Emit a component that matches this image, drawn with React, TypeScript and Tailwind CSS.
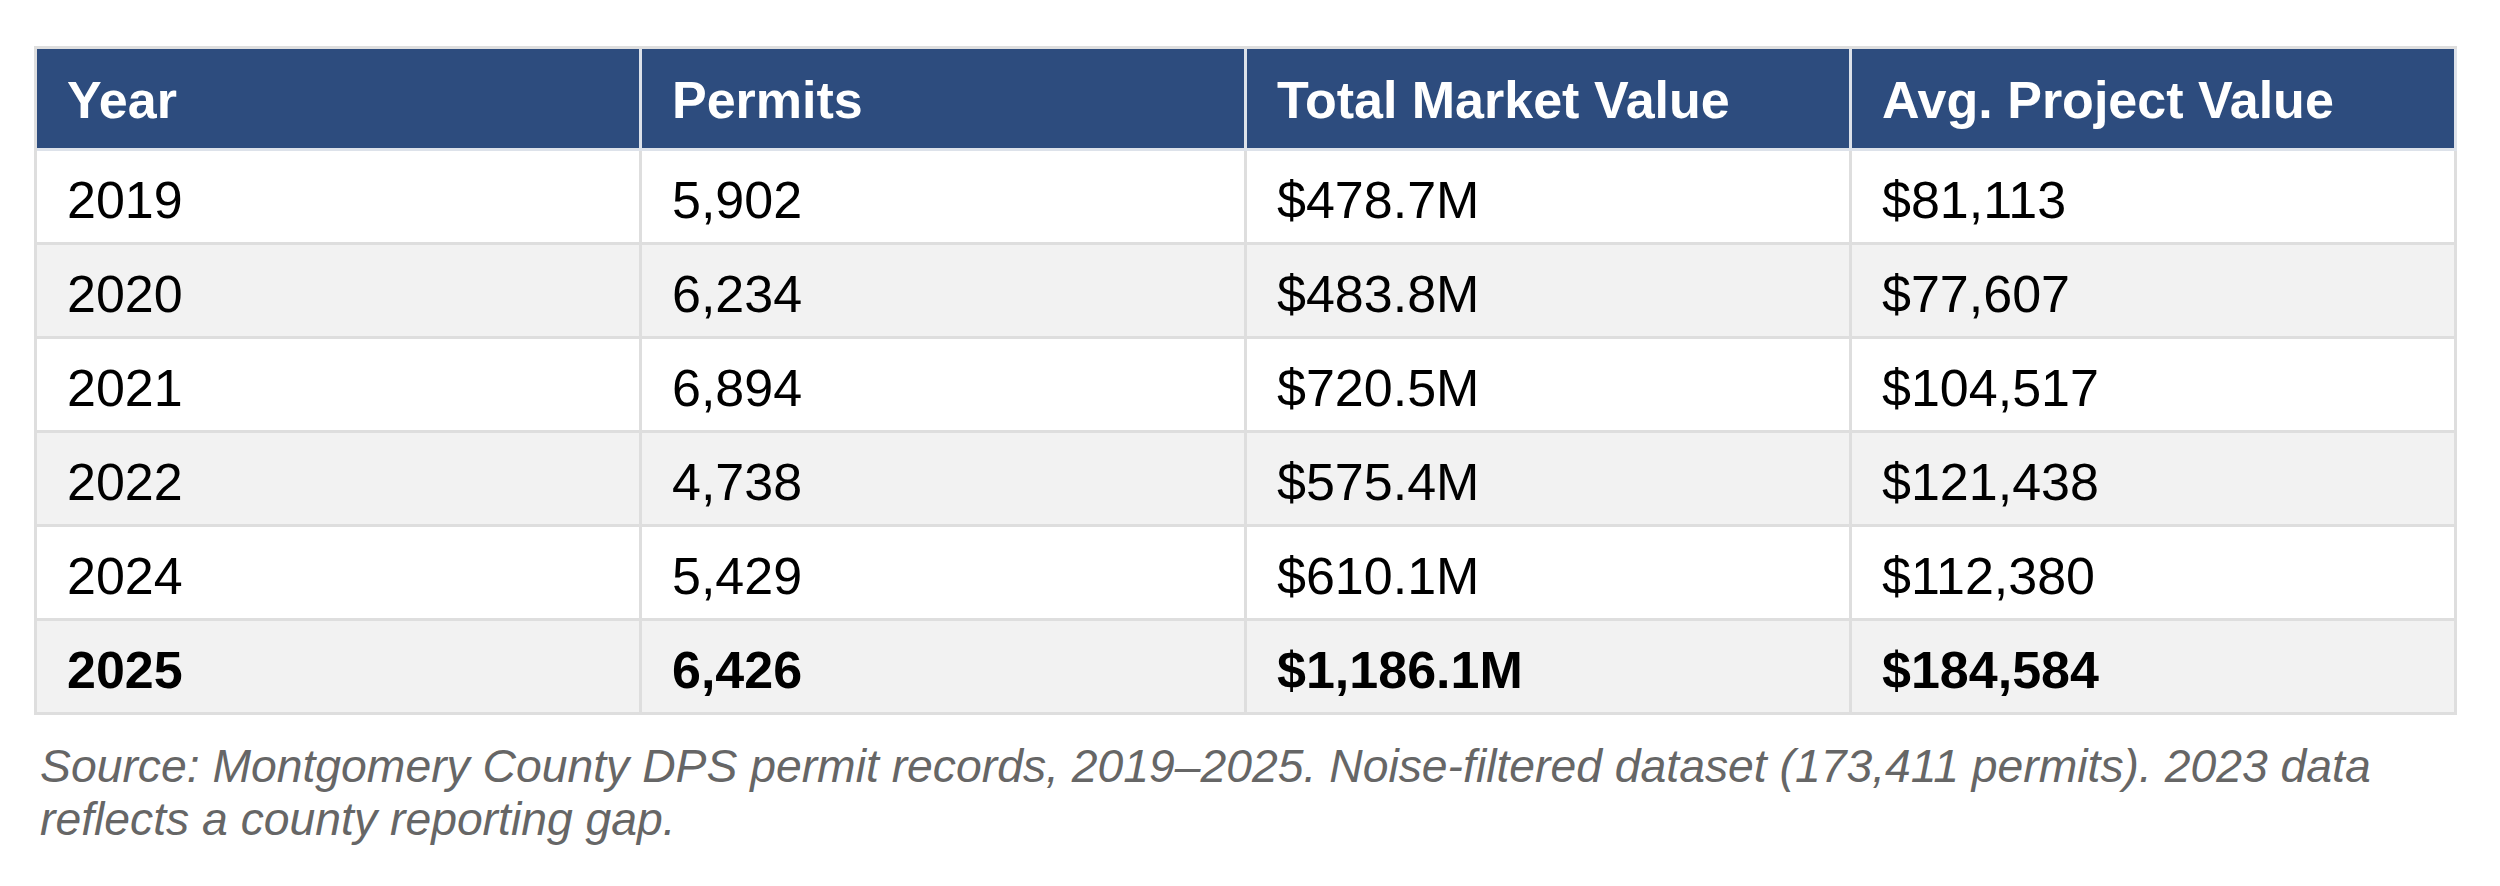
const headers = ["Year", "Permits", "Total Market Value", "Avg. Project Value"];

const rows = [
  ["2019", "5,902", "$478.7M", "$81,113"],
  ["2020", "6,234", "$483.8M", "$77,607"],
  ["2021", "6,894", "$720.5M", "$104,517"],
  ["2022", "4,738", "$575.4M", "$121,438"],
  ["2024", "5,429", "$610.1M", "$112,380"],
  ["2025", "6,426", "$1,186.1M", "$184,584"],
];

const PermitTable = () => {
  return (
    <div className="min-h-screen bg-white font-['Liberation_Sans',Arial,sans-serif]">
      <div className="pt-[46px] pl-[34px]">
        {/* --- TABLE --- */}
        <div className="w-[2423px] grid grid-cols-4 border-t-[3px] border-l-[3px] border-[#dedede]">
          {headers.map((h) => (
            <div
              key={h}
              className="h-[102px] flex items-center pl-[30px] pt-[3px] bg-[#2d4c7e] text-white font-bold text-[52px] border-r-[3px] border-b-[3px] border-[#dde2ea]"
            >
              {h}
            </div>
          ))}
          {rows.map((row, i) => {
            const isLast = i === rows.length - 1;
            const bg = i % 2 === 0 ? "bg-white" : "bg-[#f2f2f2]";
            return row.map((cell, j) => (
              <div
                key={`${i}-${j}`}
                className={`h-[94px] flex items-center pl-[30px] pt-[6px] text-[52px] text-black border-r-[3px] border-b-[3px] border-[#dedede] ${bg} ${isLast ? "font-bold" : ""}`}
              >
                {cell}
              </div>
            ));
          })}
        </div>

        {/* --- FOOTNOTE --- */}
        <p className="w-[2423px] mt-[25px] pl-[6px] italic text-[46.3px] leading-[53px] text-[#666666]">
          Source: Montgomery County DPS permit records, 2019–2025. Noise-filtered dataset (173,411 permits). 2023 data reflects a county reporting gap.
        </p>
      </div>
    </div>
  );
};

export default PermitTable;
